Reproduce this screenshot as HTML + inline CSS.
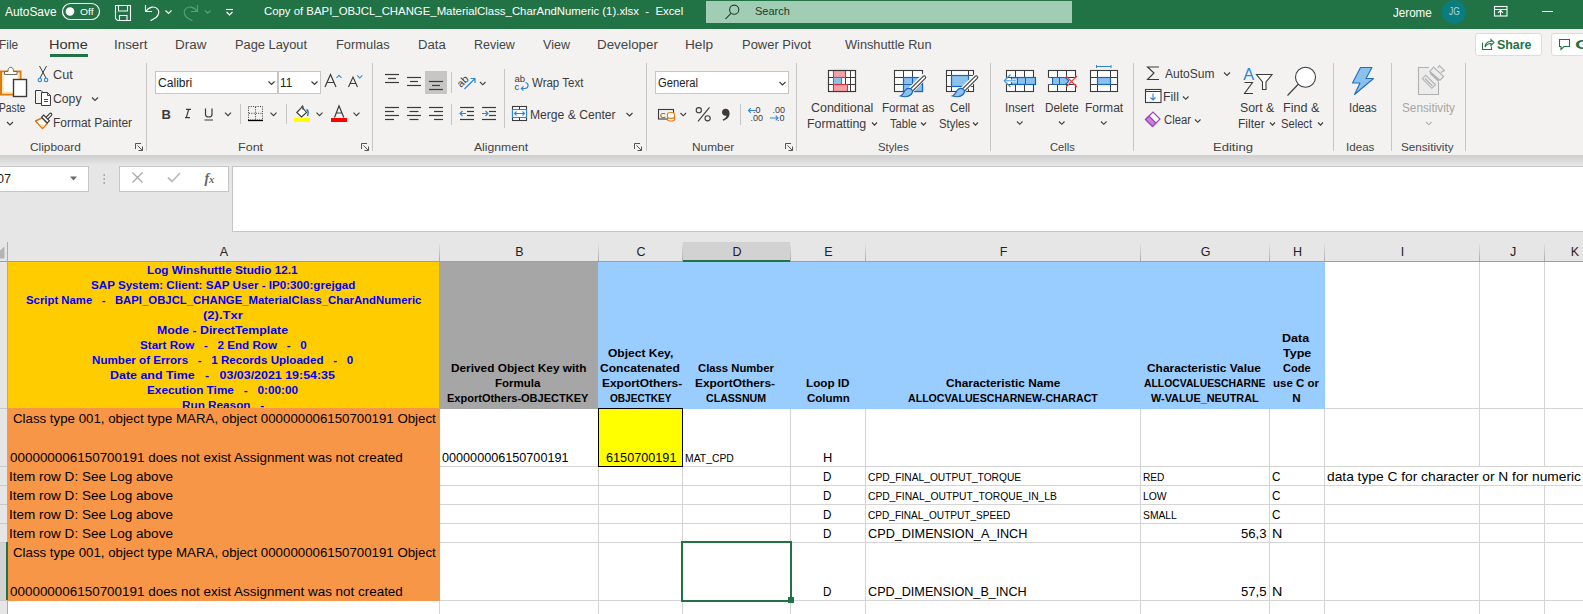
<!DOCTYPE html>
<html><head><meta charset="utf-8">
<style>
*{margin:0;padding:0;box-sizing:border-box}
html,body{width:1583px;height:614px;overflow:hidden;background:#fff;position:relative}
body{font-family:"Liberation Sans",sans-serif}
.r{position:absolute}
.t{position:absolute;white-space:pre;line-height:1;transform-origin:0 0}
svg{position:absolute;left:0;top:0}
</style></head><body>
<div class="r" style="left:0px;top:0px;width:1583px;height:29px;background:#217346;"></div>
<div class="r" style="left:0px;top:29px;width:1583px;height:126px;background:#f3f2f1;"></div>
<div class="r" style="left:0px;top:155px;width:1583px;height:87px;background:#e6e6e6;"></div>
<div class="r" style="left:0px;top:155px;width:1583px;height:11px;background:linear-gradient(#cecece,#e8e8e8);"></div>
<div class="r" style="left:50px;top:54px;width:38px;height:3px;background:#217346;"></div>
<div class="r" style="left:706px;top:1px;width:366px;height:22px;background:#a2cdb5;"></div>
<div class="r" style="left:1442px;top:0px;width:24px;height:24px;background:#0b7d7f;border-radius:12px"></div>
<div class="r" style="left:1474.5px;top:32.5px;width:67px;height:23px;background:#fff;border:1px solid #dedcda;border-radius:3px"></div>
<div class="r" style="left:1550.5px;top:32.5px;width:60px;height:23px;background:#fff;border:1px solid #dedcda;border-radius:3px"></div>
<div class="r" style="left:155px;top:71px;width:123px;height:23px;background:#fff;border:1px solid #c8c6c4"></div>
<div class="r" style="left:278px;top:71px;width:43px;height:23px;background:#fff;border:1px solid #c8c6c4"></div>
<div class="r" style="left:425px;top:71px;width:22px;height:23px;background:#c8c6c4;"></div>
<div class="r" style="left:655px;top:71px;width:134px;height:23px;background:#fff;border:1px solid #c8c6c4"></div>
<div class="r" style="left:-2px;top:166px;width:91px;height:26px;background:#fff;border:1px solid #c6c6c6"></div>
<div class="r" style="left:119px;top:166px;width:110px;height:26px;background:#fff;border:1px solid #c6c6c6"></div>
<div class="r" style="left:232px;top:166px;width:1360px;height:66px;background:#fff;border:1px solid #c6c6c6"></div>
<div class="r" style="left:0px;top:242px;width:1583px;height:19px;background:#e6e6e6;"></div>
<div class="r" style="left:683px;top:242px;width:107px;height:19px;background:#d2d2d2;"></div>
<div class="r" style="left:0px;top:261px;width:1583px;height:1px;background:#9e9e9e;"></div>
<div class="r" style="left:683px;top:260px;width:107px;height:2px;background:#217346;"></div>
<div class="r" style="left:0px;top:262px;width:7px;height:352px;background:#e6e6e6;"></div>
<div class="r" style="left:8px;top:262px;width:1575px;height:352px;background:#fff;"></div>
<div class="r" style="left:8px;top:262px;width:431px;height:146px;background:#ffcc00;"></div>
<div class="r" style="left:440px;top:262px;width:158px;height:146px;background:#a6a6a6;"></div>
<div class="r" style="left:599px;top:262px;width:726px;height:146px;background:#99ccff;"></div>
<div class="r" style="left:8px;top:409px;width:431px;height:191px;background:#f79646;"></div>
<div class="r" style="left:599px;top:409px;width:83px;height:57px;background:#ffff00;"></div>
<div class="r" style="left:439px;top:262px;width:1px;height:352px;background:#d4d4d4"></div><div class="r" style="left:598px;top:262px;width:1px;height:352px;background:#d4d4d4"></div><div class="r" style="left:682px;top:262px;width:1px;height:352px;background:#d4d4d4"></div><div class="r" style="left:790px;top:262px;width:1px;height:352px;background:#d4d4d4"></div><div class="r" style="left:865px;top:262px;width:1px;height:352px;background:#d4d4d4"></div><div class="r" style="left:1140px;top:262px;width:1px;height:352px;background:#d4d4d4"></div><div class="r" style="left:1269px;top:262px;width:1px;height:352px;background:#d4d4d4"></div><div class="r" style="left:1324px;top:262px;width:1px;height:352px;background:#d4d4d4"></div><div class="r" style="left:1479px;top:262px;width:1px;height:352px;background:#d4d4d4"></div><div class="r" style="left:1544px;top:262px;width:1px;height:352px;background:#d4d4d4"></div><div class="r" style="left:8px;top:408px;width:1575px;height:1px;background:#d4d4d4"></div><div class="r" style="left:8px;top:466px;width:1575px;height:1px;background:#d4d4d4"></div><div class="r" style="left:8px;top:485px;width:1575px;height:1px;background:#d4d4d4"></div><div class="r" style="left:8px;top:504px;width:1575px;height:1px;background:#d4d4d4"></div><div class="r" style="left:8px;top:523px;width:1575px;height:1px;background:#d4d4d4"></div><div class="r" style="left:8px;top:542px;width:1575px;height:1px;background:#d4d4d4"></div><div class="r" style="left:8px;top:600px;width:1575px;height:1px;background:#d4d4d4"></div>
<div class="r" style="left:8px;top:262px;width:431px;height:146px;background:#ffcc00"></div><div class="r" style="left:439px;top:262px;width:159px;height:147px;background:#a6a6a6"></div><div class="r" style="left:598px;top:262px;width:727px;height:147px;background:#99ccff"></div><div class="r" style="left:8px;top:408px;width:432px;height:193px;background:#f79646"></div><div class="r" style="left:598px;top:408px;width:85px;height:59px;background:#000"></div><div class="r" style="left:599px;top:409px;width:83px;height:57px;background:#ffff00"></div><div class="r" style="left:1479px;top:467px;width:1px;height:18px;background:#fff"></div><div class="r" style="left:1544px;top:467px;width:1px;height:18px;background:#fff"></div><div class="r" style="left:681px;top:541px;width:111px;height:61px;background:#217346"></div><div class="r" style="left:683px;top:543px;width:107px;height:57px;background:#fff"></div><div class="r" style="left:788px;top:597px;width:6px;height:6px;background:#217346"></div><div class="r" style="left:786px;top:596px;width:2px;height:2px;background:#fff"></div>
<div class="r" style="left:7px;top:242px;width:1px;height:19px;background:linear-gradient(#e6e6e6,#ababab)"></div><div class="r" style="left:439px;top:242px;width:1px;height:19px;background:linear-gradient(#e6e6e6,#ababab)"></div><div class="r" style="left:598px;top:242px;width:1px;height:19px;background:linear-gradient(#e6e6e6,#ababab)"></div><div class="r" style="left:682px;top:242px;width:1px;height:19px;background:linear-gradient(#e6e6e6,#ababab)"></div><div class="r" style="left:790px;top:242px;width:1px;height:19px;background:linear-gradient(#e6e6e6,#ababab)"></div><div class="r" style="left:865px;top:242px;width:1px;height:19px;background:linear-gradient(#e6e6e6,#ababab)"></div><div class="r" style="left:1140px;top:242px;width:1px;height:19px;background:linear-gradient(#e6e6e6,#ababab)"></div><div class="r" style="left:1269px;top:242px;width:1px;height:19px;background:linear-gradient(#e6e6e6,#ababab)"></div><div class="r" style="left:1324px;top:242px;width:1px;height:19px;background:linear-gradient(#e6e6e6,#ababab)"></div><div class="r" style="left:1479px;top:242px;width:1px;height:19px;background:linear-gradient(#e6e6e6,#ababab)"></div><div class="r" style="left:1544px;top:242px;width:1px;height:19px;background:linear-gradient(#e6e6e6,#ababab)"></div><div class="r" style="left:7px;top:242px;width:1px;height:372px;background:#ababab"></div><div class="r" style="left:0;top:408px;width:7px;height:1px;background:#c8c8c8"></div><div class="r" style="left:0;top:466px;width:7px;height:1px;background:#c8c8c8"></div><div class="r" style="left:0;top:485px;width:7px;height:1px;background:#c8c8c8"></div><div class="r" style="left:0;top:504px;width:7px;height:1px;background:#c8c8c8"></div><div class="r" style="left:0;top:523px;width:7px;height:1px;background:#c8c8c8"></div><div class="r" style="left:0;top:542px;width:7px;height:1px;background:#c8c8c8"></div><div class="r" style="left:0;top:600px;width:7px;height:1px;background:#c8c8c8"></div><div class="r" style="left:0px;top:543px;width:6px;height:57px;background:#d2d2d2"></div><div class="r" style="left:6px;top:542px;width:2px;height:58px;background:#217346"></div>
<svg width="1583" height="614" viewBox="0 0 1583 614"><rect x="62.5" y="3.5" width="37" height="16" rx="8" fill="none" stroke="#fff" stroke-width="1.2"/><circle cx="70" cy="11.5" r="4.3" fill="#fff"/><path d="M115.5 5.5H130.5V20.5H117.5L115.5 18.5Z" fill="none" stroke="#fff" stroke-width="1.1"/><path d="M118.5 5.5V11H127.5V5.5" fill="none" stroke="#fff" stroke-width="1.1"/><path d="M119.5 20.5V15.5H127V20.5" fill="none" stroke="#fff" stroke-width="1.1"/><path d="M145.5 5V11.5H152" fill="none" stroke="#fff" stroke-width="1.1"/><path d="M146 11.2C149 6.5 155 5.5 158 9.5C160 12.5 158.5 15 156 17.5L150.5 20.8" fill="none" stroke="#fff" stroke-width="1.2"/><path d="M165.5 10.5L168.5 13.5L171.5 10.5" fill="none" stroke="#fff" stroke-width="1.2"/><path d="M197.5 5V11.5H191" fill="none" stroke="#5e9c7a" stroke-width="1.1"/><path d="M197 11.2C194 6.5 188 5.5 185 9.5C183 12.5 184.5 15 187 17.5L192.5 20.8" fill="none" stroke="#5e9c7a" stroke-width="1.2"/><path d="M205 10.5L207.75 13.2L210.5 10.5" fill="none" stroke="#5e9c7a" stroke-width="1.1"/><path d="M226 9.5L233 9.5" stroke="#fff" stroke-width="1.1" fill="none"/><path d="M226.5 12L229.5 15L232.5 12" fill="none" stroke="#fff" stroke-width="1.2"/><circle cx="734.2" cy="9.7" r="4.6" fill="none" stroke="#1f3b2b" stroke-width="1.1"/><path d="M731 13.3L725.5 18.8" stroke="#1f3b2b" stroke-width="1.1" fill="none"/><rect x="1494.5" y="6.5" width="12.5" height="9.5" fill="none" stroke="#fff" stroke-width="1.1"/><path d="M1494.5 9.5L1507 9.5" stroke="#fff" stroke-width="1" fill="none"/><path d="M1498 12.8L1500.5 10.3L1503 12.8M1500.5 10.5V16" fill="none" stroke="#fff" stroke-width="1.1"/><path d="M1542 11.5L1553 11.5" stroke="#fff" stroke-width="1" fill="none"/><rect x="1" y="71.5" width="19.5" height="23" fill="#fff" stroke="#e07a10" stroke-width="2" /><rect x="3" y="73.5" width="15.5" height="19" fill="#fff" stroke="#fde5a8" stroke-width="1.6" /><path d="M4.5 74.5V71.5H8C8 68.5 9 67.3 10.7 67.3C12.4 67.3 13.5 68.5 13.5 71.5H17V74.5Z" fill="#fff" stroke="#6b6b6b" stroke-width="1"/><rect x="13.5" y="79.5" width="13" height="17" fill="#fff" stroke="#3b3b3b" stroke-width="1.4" /><path d="M7 122L10.0 125L13 122" fill="none" stroke="#3b3b3b" stroke-width="1.1"/><path d="M39.5 66L46 78" stroke="#3b3b3b" stroke-width="1" fill="none"/><path d="M46.5 66L40 78" stroke="#3b3b3b" stroke-width="1" fill="none"/><circle cx="39.8" cy="80" r="1.7" fill="none" stroke="#2b88d8" stroke-width="1.1"/><circle cx="46.1" cy="80" r="1.7" fill="none" stroke="#2b88d8" stroke-width="1.1"/><path d="M41.5 103.5H35.5V90.5H41L43.5 93" fill="none" stroke="#3b3b3b" stroke-width="1"/><path d="M41.5 92.5H47.5L50.5 95.5V105.5H41.5Z" fill="#fff" stroke="#3b3b3b" stroke-width="1"/><path d="M47.5 92.5V95.5H50.5M44 99.5H48M44 101.5H48" fill="none" stroke="#3b3b3b" stroke-width="0.9"/><path d="M92 97.5L95.0 100.5L98 97.5" fill="none" stroke="#3b3b3b" stroke-width="1.1"/><path d="M35.5 121L42 117.8L47.3 123.6L42.5 128.6Z" fill="#fff" stroke="#d87316" stroke-width="1.4" stroke-linejoin="round"/><path d="M39.5 124L45.3 125.3L42.6 127.8Z" fill="#fddc8a"/><path d="M46.3 118.7L50.6 114.4" stroke="#333" stroke-width="3.6" stroke-linecap="round"/><path d="M46.3 118.7L50.6 114.4" stroke="#fff" stroke-width="1.4" stroke-linecap="round"/><path d="M41.6 117.2L43.7 115.1L49.4 120.8L47.3 122.9Z" fill="#fff" stroke="#333" stroke-width="1.1"/><path d="M135.5 149V143.5H141M137.5 145.5L142.5 150.5M142.5 146.5V150.5H138.5" fill="none" stroke="#555" stroke-width="1"/><path d="M361.5 149V143.5H367M363.5 145.5L368.5 150.5M368.5 146.5V150.5H364.5" fill="none" stroke="#555" stroke-width="1"/><path d="M634.5 149V143.5H640M636.5 145.5L641.5 150.5M641.5 146.5V150.5H637.5" fill="none" stroke="#555" stroke-width="1"/><path d="M785.5 149V143.5H791M787.5 145.5L792.5 150.5M792.5 146.5V150.5H788.5" fill="none" stroke="#555" stroke-width="1"/><path d="M268.5 81.5L271.5 84.5L274.5 81.5" fill="none" stroke="#3b3b3b" stroke-width="1.2"/><path d="M311.5 81.5L314.5 84.5L317.5 81.5" fill="none" stroke="#3b3b3b" stroke-width="1.2"/><path d="M325 87L330.5 74.5L336 87M327 82.5H334" fill="none" stroke="#3b3b3b" stroke-width="1.2"/><path d="M336.5 78L339 75.3L341.5 78" fill="none" stroke="#2b88d8" stroke-width="1.1"/><path d="M348.5 87L353 77L357.5 87M350.3 83.5H355.7" fill="none" stroke="#3b3b3b" stroke-width="1.1"/><path d="M357.3 75.3L359.8 78L362.3 75.3" fill="none" stroke="#2b88d8" stroke-width="1.1"/><text x="161.5" y="118.5" font-family="Liberation Sans" font-weight="bold" font-size="13" fill="#3b3b3b">B</text><path d="M186 109.3H191M185 117.7H190M188.7 109.3L186.3 117.7" fill="none" stroke="#3b3b3b" stroke-width="1.2"/><path d="M205.5 108.5V114.5C205.5 117.8 212 117.8 212 114.5V108.5" fill="none" stroke="#3b3b3b" stroke-width="1.2"/><path d="M204.5 120L213 120" stroke="#3b3b3b" stroke-width="1" fill="none"/><path d="M225 112.7L228.0 115.7L231 112.7" fill="none" stroke="#3b3b3b" stroke-width="1.1"/><path d="M240.5 104L240.5 124" stroke="#c8c6c4" stroke-width="1" fill="none"/><rect x="248.5" y="106.5" width="14" height="13.5" fill="none" stroke="#3b3b3b" stroke-width="1" stroke-dasharray="1 1.3"/><path d="M255.5 107V120M249 113.3H262" fill="none" stroke="#3b3b3b" stroke-width="1" stroke-dasharray="1 1.3"/><path d="M248 120.5L263 120.5" stroke="#000" stroke-width="1.3" fill="none"/><path d="M270.5 112.7L273.5 115.7L276.5 112.7" fill="none" stroke="#3b3b3b" stroke-width="1.1"/><path d="M286.5 104L286.5 124" stroke="#c8c6c4" stroke-width="1" fill="none"/><path d="M296.8 112.5L302 107L306.5 112.5L301.5 117Z" fill="#fff" stroke="#3b3b3b" stroke-width="1.1"/><path d="M302 107.5V106C302 105.5 303 105.5 303 106V110" fill="none" stroke="#3b3b3b" stroke-width="1"/><path d="M306.5 109.5C308.5 110.5 308.5 113 307.5 116" fill="none" stroke="#1e6fc0" stroke-width="1.4"/><rect x="294" y="118" width="16" height="4" fill="#ffff00" stroke="none" stroke-width="1" /><path d="M316.5 112.7L319.5 115.7L322.5 112.7" fill="none" stroke="#3b3b3b" stroke-width="1.1"/><path d="M334.5 117.5L339 105.8L343.8 117.5M336.3 113H342" fill="none" stroke="#3b3b3b" stroke-width="1.2"/><rect x="331" y="118" width="16" height="4" fill="#ff0000" stroke="none" stroke-width="1" /><path d="M353.5 112.7L356.5 115.7L359.5 112.7" fill="none" stroke="#3b3b3b" stroke-width="1.1"/><path d="M385 74.5L399 74.5" stroke="#3b3b3b" stroke-width="1.2" fill="none"/><path d="M388 78.5L396 78.5" stroke="#3b3b3b" stroke-width="1.2" fill="none"/><path d="M385 82.5L399 82.5" stroke="#3b3b3b" stroke-width="1.2" fill="none"/><path d="M407 77.5L421 77.5" stroke="#3b3b3b" stroke-width="1.2" fill="none"/><path d="M410 81.5L418 81.5" stroke="#3b3b3b" stroke-width="1.2" fill="none"/><path d="M407 85.5L421 85.5" stroke="#3b3b3b" stroke-width="1.2" fill="none"/><path d="M429 81.5L443 81.5" stroke="#3b3b3b" stroke-width="1.2" fill="none"/><path d="M432 85.5L440 85.5" stroke="#3b3b3b" stroke-width="1.2" fill="none"/><path d="M429 89.5L443 89.5" stroke="#3b3b3b" stroke-width="1.2" fill="none"/><path d="M451.5 72L451.5 93" stroke="#c8c6c4" stroke-width="1" fill="none"/><text x="0" y="0" font-family="Liberation Sans" font-size="10.5" fill="#3b3b3b" transform="translate(461 88) rotate(-45)">ab</text><path d="M464.5 89L474.5 79M470.5 78.5H475V83" fill="none" stroke="#2b88d8" stroke-width="1.2"/><path d="M480 82L482.75 84.8L485.5 82" fill="none" stroke="#3b3b3b" stroke-width="1.1"/><path d="M385 107.5L399 107.5" stroke="#3b3b3b" stroke-width="1.2" fill="none"/><path d="M385 111.5L394 111.5" stroke="#3b3b3b" stroke-width="1.2" fill="none"/><path d="M385 115.5L399 115.5" stroke="#3b3b3b" stroke-width="1.2" fill="none"/><path d="M385 119.5L394 119.5" stroke="#3b3b3b" stroke-width="1.2" fill="none"/><path d="M407 107.5L421 107.5" stroke="#3b3b3b" stroke-width="1.2" fill="none"/><path d="M409.5 111.5L418.5 111.5" stroke="#3b3b3b" stroke-width="1.2" fill="none"/><path d="M407 115.5L421 115.5" stroke="#3b3b3b" stroke-width="1.2" fill="none"/><path d="M409.5 119.5L418.5 119.5" stroke="#3b3b3b" stroke-width="1.2" fill="none"/><path d="M429 107.5L443 107.5" stroke="#3b3b3b" stroke-width="1.2" fill="none"/><path d="M434 111.5L443 111.5" stroke="#3b3b3b" stroke-width="1.2" fill="none"/><path d="M429 115.5L443 115.5" stroke="#3b3b3b" stroke-width="1.2" fill="none"/><path d="M434 119.5L443 119.5" stroke="#3b3b3b" stroke-width="1.2" fill="none"/><path d="M451.5 104L451.5 125" stroke="#c8c6c4" stroke-width="1" fill="none"/><path d="M460 107.5L474 107.5" stroke="#3b3b3b" stroke-width="1.2" fill="none"/><path d="M467 111.5L474 111.5" stroke="#3b3b3b" stroke-width="1.2" fill="none"/><path d="M467 115.5L474 115.5" stroke="#3b3b3b" stroke-width="1.2" fill="none"/><path d="M460 119.5L474 119.5" stroke="#3b3b3b" stroke-width="1.2" fill="none"/><path d="M460 113.5H466M462.5 111L460 113.5L462.5 116" fill="none" stroke="#2b88d8" stroke-width="1.2"/><path d="M482 107.5L496 107.5" stroke="#3b3b3b" stroke-width="1.2" fill="none"/><path d="M489 111.5L496 111.5" stroke="#3b3b3b" stroke-width="1.2" fill="none"/><path d="M489 115.5L496 115.5" stroke="#3b3b3b" stroke-width="1.2" fill="none"/><path d="M482 119.5L496 119.5" stroke="#3b3b3b" stroke-width="1.2" fill="none"/><path d="M482 113.5H488M485.5 111L488 113.5L485.5 116" fill="none" stroke="#2b88d8" stroke-width="1.2"/><path d="M504.5 69L504.5 128" stroke="#c8c6c4" stroke-width="1" fill="none"/><text x="514.5" y="82" font-family="Liberation Sans" font-size="9.5" fill="#3b3b3b">ab</text><text x="514.5" y="89.5" font-family="Liberation Sans" font-size="9.5" fill="#3b3b3b">c</text><path d="M525.5 82.5C529 83 529 88 525 88.5H521.5M523.5 86.3L521.3 88.5L523.5 90.7" fill="none" stroke="#2b88d8" stroke-width="1.2"/><rect x="512.5" y="106.5" width="14" height="14" fill="#fff" stroke="#3b3b3b" stroke-width="1.1" /><rect x="512.5" y="109.5" width="14" height="8" fill="#fff" stroke="#2b88d8" stroke-width="1.1" /><path d="M519.5 106.5L519.5 109.5" stroke="#3b3b3b" stroke-width="1" fill="none"/><path d="M519.5 117.5L519.5 120.5" stroke="#3b3b3b" stroke-width="1" fill="none"/><path d="M514.5 113.5H524.5M516.5 111.5L514.5 113.5L516.5 115.5M522.5 111.5L524.5 113.5L522.5 115.5" fill="none" stroke="#2b88d8" stroke-width="1.1"/><path d="M626.5 113L629.5 116L632.5 113" fill="none" stroke="#3b3b3b" stroke-width="1.1"/><path d="M779.5 82L782.5 85L785.5 82" fill="none" stroke="#3b3b3b" stroke-width="1.2"/><rect x="658.5" y="109.5" width="15" height="9.5" fill="none" stroke="#3b3b3b" stroke-width="1.1" /><text x="660" y="117.5" font-family="Liberation Sans" font-size="8" fill="#3b3b3b">C</text><ellipse cx="671" cy="114" rx="3.5" ry="1.5" fill="#fff" stroke="#e07a10" stroke-width="1.1"/><path d="M667.5 114V119.5C667.5 121.5 674.5 121.5 674.5 119.5V114M667.5 117C667.5 118.8 674.5 118.8 674.5 117" fill="#fff" stroke="#e07a10" stroke-width="1.1"/><path d="M680.5 113L683.25 115.8L686.0 113" fill="none" stroke="#3b3b3b" stroke-width="1.1"/><circle cx="698.8" cy="110.2" r="2.6" fill="none" stroke="#3b3b3b" stroke-width="1.1"/><circle cx="707.6" cy="118.3" r="2.6" fill="none" stroke="#3b3b3b" stroke-width="1.1"/><path d="M709.5 107.3L698 121.3" stroke="#3b3b3b" stroke-width="1.1"/><path d="M725.5 108.8C728 108.8 729.6 110.8 729.6 113.5C729.6 116.8 727.2 119.5 723.2 120.8L722.6 119.6C725 118.6 726.3 117.2 726.5 115.6C726.2 115.8 725.8 115.8 725.5 115.8C723.5 115.8 722 114.3 722 112.3C722 110.3 723.5 108.8 725.5 108.8Z" fill="#3b3b3b"/><path d="M740.5 104L740.5 125" stroke="#c8c6c4" stroke-width="1" fill="none"/><text x="753" y="112.5" font-family="Liberation Sans" font-size="9" fill="#3b3b3b">.0</text><text x="750.5" y="120.8" font-family="Liberation Sans" font-size="9" fill="#3b3b3b">.00</text><path d="M748.5 110.5H756M750.8 108.2L748.5 110.5L750.8 112.8" fill="none" stroke="#2b88d8" stroke-width="1.1"/><text x="772.5" y="112.5" font-family="Liberation Sans" font-size="9" fill="#3b3b3b">.00</text><text x="777" y="120.8" font-family="Liberation Sans" font-size="9" fill="#3b3b3b">.0</text><path d="M770 118H778M775.7 115.7L778 118L775.7 120.3" fill="none" stroke="#2b88d8" stroke-width="1.1"/><rect x="828.5" y="70.5" width="27" height="21" fill="#fff" stroke="#3b3b3b" stroke-width="1.1" /><path d="M845.5 70.5V91.5M850.5 70.5V91.5M828.5 77.5H855.5M828.5 84.5H855.5" fill="none" stroke="#3b3b3b" stroke-width="1"/><rect x="833.5" y="70.5" width="12" height="7" fill="#f4a0a8" stroke="#e03030" stroke-width="1.1" /><rect x="833.5" y="77.5" width="8" height="7" fill="#8cc0ed" stroke="#2b88d8" stroke-width="1.1" /><rect x="833.5" y="84.5" width="14" height="7" fill="#f4a0a8" stroke="#e03030" stroke-width="1.1" /><rect x="828.5" y="70.5" width="27" height="21" fill="none" stroke="#3b3b3b" stroke-width="1.1" /><rect x="894.5" y="70.5" width="28" height="21" fill="#fff" stroke="#3b3b3b" stroke-width="1.1" /><path d="M903.5 70.5V91.5M912.5 70.5V91.5M894.5 77.5H922.5M894.5 84.5H922.5" fill="none" stroke="#3b3b3b" stroke-width="1"/><rect x="903.5" y="77.5" width="19" height="14" fill="#8cc0ed" stroke="#1565c0" stroke-width="1.2" /><path d="M912.5 77.5V91.5M903.5 84.5H922.5" fill="none" stroke="#1565c0" stroke-width="1.1"/><path d="M925 76L910 91" stroke="#f3f2f1" stroke-width="6.5" stroke-linecap="round"/><path d="M924.2 77.3L911.5 90" stroke="#404040" stroke-width="4" stroke-linecap="round"/><path d="M924.2 77.3L911.5 90" stroke="#fff" stroke-width="1.8" stroke-linecap="round"/><path d="M900.5 96C904 97 908.5 97 911 94.5C913 92.5 913 90 911 89C909 88 906.5 88.5 905 90.5C903.5 92.5 903 95 900.5 96Z" fill="#8cc0ed" stroke="#1565c0" stroke-width="1.2"/><rect x="946.5" y="70.5" width="27" height="21" fill="#fff" stroke="#3b3b3b" stroke-width="1.1" /><path d="M951.5 70.5V91.5M968.5 70.5V91.5M946.5 75.5H973.5M946.5 86.5H973.5" fill="none" stroke="#3b3b3b" stroke-width="1"/><rect x="951.5" y="75.5" width="17" height="11" fill="#8cc0ed" stroke="#1565c0" stroke-width="1.2" /><path d="M977 76L962 91" stroke="#f3f2f1" stroke-width="6.5" stroke-linecap="round"/><path d="M976.2 77.3L963.5 90" stroke="#404040" stroke-width="4" stroke-linecap="round"/><path d="M976.2 77.3L963.5 90" stroke="#fff" stroke-width="1.8" stroke-linecap="round"/><path d="M952.5 96C956 97 960.5 97 963 94.5C965 92.5 965 90 963 89C961 88 958.5 88.5 957 90.5C955.5 92.5 955 95 952.5 96Z" fill="#8cc0ed" stroke="#1565c0" stroke-width="1.2"/><path d="M872 122.5L874.5 125.1L877 122.5" fill="none" stroke="#3b3b3b" stroke-width="1.1"/><path d="M921 122.5L923.5 125.1L926 122.5" fill="none" stroke="#3b3b3b" stroke-width="1.1"/><path d="M973 122.5L975.5 125.1L978 122.5" fill="none" stroke="#3b3b3b" stroke-width="1.1"/><rect x="1006.5" y="70.5" width="27" height="21" fill="#fff" stroke="#3b3b3b" stroke-width="1.1" /><path d="M1015.5 70.5V91.5M1024.5 70.5V91.5M1006.5 77.5H1033.5M1006.5 84.5H1033.5" fill="none" stroke="#3b3b3b" stroke-width="1"/><rect x="1005.8" y="77.8" width="1.5" height="6.4" fill="#f3f2f1" stroke="none" stroke-width="1" /><rect x="1011.5" y="77.5" width="24" height="7" fill="#8cc0ed" stroke="#1565c0" stroke-width="1.2" /><path d="M1017.5 77.5L1017.5 84.5" stroke="#1565c0" stroke-width="1" fill="none"/><path d="M1025.5 77.5L1025.5 84.5" stroke="#1565c0" stroke-width="1" fill="none"/><path d="M1004.5 80.8H1016.5" stroke="#fff" stroke-width="2.6"/><path d="M1005 80.8H1016" stroke="#3a96dd" stroke-width="1"/><path d="M1010.5 74.5L1004.3 80.8L1010.5 87" fill="none" stroke="#3a96dd" stroke-width="1.2"/><rect x="1048.5" y="70.5" width="27" height="21" fill="#fff" stroke="#3b3b3b" stroke-width="1.1" /><path d="M1057.5 70.5V91.5M1066.5 70.5V91.5M1048.5 77.5H1075.5M1048.5 84.5H1075.5" fill="none" stroke="#3b3b3b" stroke-width="1"/><rect x="1047.5" y="77.8" width="3.5" height="6.4" fill="#f3f2f1" stroke="none" stroke-width="1" /><rect x="1074.5" y="77.8" width="2" height="6.4" fill="#f3f2f1" stroke="none" stroke-width="1" /><path d="M1052.5 77.5H1065.5L1069 81L1065.5 84.5H1052.5Z" fill="#8cc0ed" stroke="#1565c0" stroke-width="1.2"/><path d="M1059.5 77.5L1059.5 84.5" stroke="#1565c0" stroke-width="1" fill="none"/><path d="M1066 76L1077 87M1077 76L1066 87" stroke="#e8403a" stroke-width="1.1"/><rect x="1090.5" y="70.5" width="27" height="21" fill="#fff" stroke="#3b3b3b" stroke-width="1.1" /><path d="M1097.5 70.5V91.5M1110.5 70.5V91.5M1090.5 77.5H1117.5M1090.5 84.5H1117.5" fill="none" stroke="#3b3b3b" stroke-width="1"/><rect x="1097.5" y="77.5" width="13" height="7" fill="#8cc0ed" stroke="#1565c0" stroke-width="1.2" /><path d="M1096.5 66.5H1111M1096.5 65V68M1111 65V68" fill="none" stroke="#2b88d8" stroke-width="1"/><path d="M1017 121.5L1019.75 124.3L1022.5 121.5" fill="none" stroke="#3b3b3b" stroke-width="1.1"/><path d="M1059 121.5L1061.75 124.3L1064.5 121.5" fill="none" stroke="#3b3b3b" stroke-width="1.1"/><path d="M1101 121.5L1103.75 124.3L1106.5 121.5" fill="none" stroke="#3b3b3b" stroke-width="1.1"/><path d="M1159 67H1147.5L1154 73L1147.5 79.5H1159" fill="none" stroke="#3b3b3b" stroke-width="1.1"/><path d="M1224 72.5L1227.0 75.5L1230 72.5" fill="none" stroke="#3b3b3b" stroke-width="1.1"/><rect x="1145.5" y="89.5" width="15.5" height="13" fill="#fff" stroke="#3b3b3b" stroke-width="1.1" /><path d="M1145.5 91.5L1161 91.5" stroke="#3b3b3b" stroke-width="1" fill="none"/><path d="M1153 93.5V100M1150.5 97.5L1153 100L1155.5 97.5" fill="none" stroke="#2b88d8" stroke-width="1.1"/><path d="M1183 96.5L1185.75 99.3L1188.5 96.5" fill="none" stroke="#3b3b3b" stroke-width="1.1"/><path d="M1145.5 119.5L1153 112L1160 119L1152.5 126.5Z" fill="#fff" stroke="#9b3fb5" stroke-width="1.1"/><path d="M1145.5 119.5L1149 116L1156 123L1152.5 126.5Z" fill="#c880d8" stroke="#9b3fb5" stroke-width="1.1"/><path d="M1195 119.5L1197.75 122.3L1200.5 119.5" fill="none" stroke="#3b3b3b" stroke-width="1.1"/><text x="1243.3" y="80" font-family="Liberation Sans" font-size="16.5" fill="#2b88d8">A</text><path d="M1244.5 82.5H1252.5L1244.5 93.5H1253" fill="none" stroke="#3b3b3b" stroke-width="1.1"/><path d="M1256.5 74.5H1272L1266 82V89.5H1262.5V82Z" fill="#fff" stroke="#3b3b3b" stroke-width="1.1"/><path d="M1270 122.5L1272.5 125.1L1275 122.5" fill="none" stroke="#3b3b3b" stroke-width="1.1"/><circle cx="1305.5" cy="77.2" r="10" fill="#fff" stroke="#3b3b3b" stroke-width="1.1"/><path d="M1298 84.5L1287.5 95.5" stroke="#3b3b3b" stroke-width="1.1" fill="none"/><path d="M1318 122.5L1320.5 125.1L1323 122.5" fill="none" stroke="#3b3b3b" stroke-width="1.1"/><path d="M1360.5 67.5H1372L1366 78.5H1373.5L1354.5 94.5L1360 83H1352.5Z" fill="#8cc0ed" stroke="#1e6fc0" stroke-width="1.1" stroke-linejoin="round"/><path d="M1429 67.5H1418.5V94.5H1438.5V82" fill="#ececec" stroke="#b0b0b0" stroke-width="1.1"/><path d="M1422.3 78.6L1425.7 75.2L1435.4 84.8L1431.8 88.3Z" fill="#ececec" stroke="#b0b0b0" stroke-width="1.1"/><path d="M1425 78.5L1432.5 86" stroke="#b0b0b0" stroke-width="1.3"/><path d="M1429.8 71.6L1433.5 67L1443.7 76.5L1440 80.2Z" fill="#ececec" stroke="#b0b0b0" stroke-width="1.1"/><path d="M1430.5 73L1438.8 81" stroke="#b0b0b0" stroke-width="2"/><path d="M1437.8 68L1439.5 65.5L1444.5 70.5L1440.8 72.5" fill="#ececec" stroke="#b0b0b0" stroke-width="1.1"/><path d="M1426 122L1428.75 124.8L1431.5 122" fill="none" stroke="#b0b0b0" stroke-width="1.1"/><path d="M146.5 63L146.5 151" stroke="#c8c6c4" stroke-width="1" fill="none"/><path d="M372.5 63L372.5 151" stroke="#c8c6c4" stroke-width="1" fill="none"/><path d="M646.5 63L646.5 151" stroke="#c8c6c4" stroke-width="1" fill="none"/><path d="M796.5 63L796.5 151" stroke="#c8c6c4" stroke-width="1" fill="none"/><path d="M990.5 63L990.5 151" stroke="#c8c6c4" stroke-width="1" fill="none"/><path d="M1133.5 63L1133.5 151" stroke="#c8c6c4" stroke-width="1" fill="none"/><path d="M1333.5 63L1333.5 151" stroke="#c8c6c4" stroke-width="1" fill="none"/><path d="M1391.5 63L1391.5 151" stroke="#c8c6c4" stroke-width="1" fill="none"/><path d="M1465.5 63L1465.5 151" stroke="#c8c6c4" stroke-width="1" fill="none"/><path d="M1482.5 42.5V49.5H1491.5V46.5" fill="none" stroke="#217346" stroke-width="1.1"/><path d="M1485 47C1485.5 43 1488 41.5 1491 41.5V39.5L1494 42.5L1491 45.5V43.5C1488.5 43.5 1486.5 44.5 1485 47Z" fill="none" stroke="#217346" stroke-width="1.1"/><path d="M1559.5 39.5H1569.5V46.5H1564L1561 49.5V46.5H1559.5Z" fill="none" stroke="#217346" stroke-width="1.1"/><path d="M70 176.5H77L73.5 180.5Z" fill="#6b6b6b"/><rect x="103.5" y="174.3" width="1.4" height="1.4" fill="#8a8a8a"/><rect x="103.5" y="178.3" width="1.4" height="1.4" fill="#8a8a8a"/><rect x="103.5" y="182.3" width="1.4" height="1.4" fill="#8a8a8a"/><path d="M132.5 172.5L142.5 182.5M142.5 172.5L132.5 182.5" stroke="#a8a8a8" stroke-width="1.3"/><path d="M168 177.5L172 181.5L180 173" fill="none" stroke="#bdbdbd" stroke-width="1.8"/><text x="204.5" y="182.5" font-family="Liberation Serif" font-style="italic" font-weight="bold" font-size="14" fill="#666">f</text><text x="209" y="182.5" font-family="Liberation Serif" font-style="italic" font-weight="bold" font-size="10.5" fill="#666">x</text><path d="M4.5 246.5V258.5H0V250.5Z" fill="#b4b4b4"/></svg>
<div class="t" style="font-size:12px;font-weight:400;color:#fff;top:5.84px;left:5.00px;transform:scaleX(0.9903);">AutoSave</div><div class="t" style="font-size:9.5px;font-weight:400;color:#fff;top:6.96px;left:80.46px;transform:scaleX(1.0833);">Off</div><div class="t" style="font-size:11.4px;font-weight:400;color:#fff;top:6.35px;left:263.50px;transform:scaleX(0.9989);">Copy of BAPI_OBJCL_CHANGE_MaterialClass_CharAndNumeric (1).xlsx &nbsp;- &nbsp;Excel</div><div class="t" style="font-size:11.5px;font-weight:400;color:#1f3b2b;top:5.67px;left:754.92px;transform:scaleX(0.9589);">Search</div><div class="t" style="font-size:12px;font-weight:400;color:#fff;top:6.84px;left:1392.76px;transform:scaleX(0.9682);">Jerome</div><div class="t" style="font-size:10px;font-weight:400;color:#a8d8d8;top:6.54px;left:1448.79px;transform:scaleX(0.8511);">JG</div><div class="t" style="font-size:12.3px;font-weight:400;color:#444;top:38.59px;left:-0.96px;transform:scaleX(0.9644);">File</div><div class="t" style="font-size:12.3px;font-weight:400;color:#333;top:38.59px;left:48.82px;transform:scaleX(1.1840);">Home</div><div class="t" style="font-size:12.3px;font-weight:400;color:#444;top:38.59px;left:113.51px;transform:scaleX(1.0891);">Insert</div><div class="t" style="font-size:12.3px;font-weight:400;color:#444;top:38.59px;left:174.81px;transform:scaleX(1.0919);">Draw</div><div class="t" style="font-size:12.3px;font-weight:400;color:#444;top:38.59px;left:234.96px;transform:scaleX(1.0426);">Page Layout</div><div class="t" style="font-size:12.3px;font-weight:400;color:#444;top:38.59px;left:336.15px;transform:scaleX(1.0480);">Formulas</div><div class="t" style="font-size:12.3px;font-weight:400;color:#444;top:38.59px;left:417.93px;transform:scaleX(1.0680);">Data</div><div class="t" style="font-size:12.3px;font-weight:400;color:#444;top:38.59px;left:474.19px;transform:scaleX(1.0127);">Review</div><div class="t" style="font-size:12.3px;font-weight:400;color:#444;top:38.59px;left:542.80px;transform:scaleX(1.0189);">View</div><div class="t" style="font-size:12.3px;font-weight:400;color:#444;top:38.59px;left:596.91px;transform:scaleX(1.0855);">Developer</div><div class="t" style="font-size:12.3px;font-weight:400;color:#444;top:38.59px;left:684.79px;transform:scaleX(1.1116);">Help</div><div class="t" style="font-size:12.3px;font-weight:400;color:#444;top:38.59px;left:741.85px;transform:scaleX(1.0527);">Power Pivot</div><div class="t" style="font-size:12.3px;font-weight:400;color:#444;top:38.59px;left:845.00px;transform:scaleX(1.0381);">Winshuttle Run</div><div class="t" style="font-size:12.5px;font-weight:700;color:#217346;top:39.42px;left:1496.75px;transform:scaleX(0.9927);">Share</div><div class="t" style="font-size:12.5px;font-weight:700;color:#217346;top:39.42px;left:1575.15px;transform:scaleX(1.6970);">C</div><div class="t" style="font-size:11.5px;font-weight:400;color:#444;top:141.77px;left:30.28px;transform:scaleX(1.0333);">Clipboard</div><div class="t" style="font-size:11.5px;font-weight:400;color:#444;top:141.77px;left:237.91px;transform:scaleX(1.0909);">Font</div><div class="t" style="font-size:11.5px;font-weight:400;color:#444;top:141.77px;left:474.00px;transform:scaleX(1.0588);">Alignment</div><div class="t" style="font-size:11.5px;font-weight:400;color:#444;top:141.77px;left:691.97px;transform:scaleX(1.0314);">Number</div><div class="t" style="font-size:11.5px;font-weight:400;color:#444;top:141.77px;left:877.51px;transform:scaleX(0.9836);">Styles</div><div class="t" style="font-size:11.5px;font-weight:400;color:#444;top:141.77px;left:1049.52px;transform:scaleX(0.9697);">Cells</div><div class="t" style="font-size:11.5px;font-weight:400;color:#444;top:141.77px;left:1212.87px;transform:scaleX(1.1343);">Editing</div><div class="t" style="font-size:11.5px;font-weight:400;color:#444;top:141.77px;left:1345.99px;transform:scaleX(1.0093);">Ideas</div><div class="t" style="font-size:11.5px;font-weight:400;color:#444;top:141.77px;left:1401.49px;transform:scaleX(1.0146);">Sensitivity</div><div class="t" style="font-size:12px;font-weight:400;color:#3b3b3b;top:101.84px;left:-0.85px;transform:scaleX(0.8547);">Paste</div><div class="t" style="font-size:12px;font-weight:400;color:#3b3b3b;top:68.84px;left:53.47px;transform:scaleX(1.0556);">Cut</div><div class="t" style="font-size:12px;font-weight:400;color:#3b3b3b;top:92.84px;left:53.49px;transform:scaleX(1.0182);">Copy</div><div class="t" style="font-size:12px;font-weight:400;color:#3b3b3b;top:116.84px;left:53.00px;transform:scaleX(0.9968);">Format Painter</div><div class="t" style="font-size:12px;font-weight:400;color:#222;top:76.84px;left:158.00px;transform:scaleX(1.0076);">Calibri</div><div class="t" style="font-size:12px;font-weight:400;color:#222;top:76.84px;left:280.27px;transform:scaleX(0.9778);">11</div><div class="t" style="font-size:12px;font-weight:400;color:#3b3b3b;top:76.84px;left:531.50px;transform:scaleX(0.9581);">Wrap Text</div><div class="t" style="font-size:12px;font-weight:400;color:#3b3b3b;top:108.74px;left:530.49px;transform:scaleX(1.0096);">Merge &amp; Center</div><div class="t" style="font-size:12px;font-weight:400;color:#222;top:76.84px;left:658.23px;transform:scaleX(0.9349);">General</div><div class="t" style="font-size:12px;font-weight:400;color:#3b3b3b;top:101.84px;left:811.08px;transform:scaleX(1.0383);">Conditional</div><div class="t" style="font-size:12px;font-weight:400;color:#3b3b3b;top:117.84px;left:806.77px;transform:scaleX(1.0332);">Formatting</div><div class="t" style="font-size:12px;font-weight:400;color:#3b3b3b;top:101.84px;left:881.83px;transform:scaleX(0.9695);">Format as</div><div class="t" style="font-size:12px;font-weight:400;color:#3b3b3b;top:117.84px;left:889.77px;transform:scaleX(0.9286);">Table</div><div class="t" style="font-size:12px;font-weight:400;color:#3b3b3b;top:101.84px;left:949.51px;transform:scaleX(0.9744);">Cell</div><div class="t" style="font-size:12px;font-weight:400;color:#3b3b3b;top:117.84px;left:938.53px;transform:scaleX(0.9449);">Styles</div><div class="t" style="font-size:12px;font-weight:400;color:#3b3b3b;top:101.84px;left:1004.62px;transform:scaleX(0.9759);">Insert</div><div class="t" style="font-size:12px;font-weight:400;color:#3b3b3b;top:101.84px;left:1044.63px;transform:scaleX(0.9684);">Delete</div><div class="t" style="font-size:12px;font-weight:400;color:#3b3b3b;top:101.84px;left:1084.59px;transform:scaleX(1.0054);">Format</div><div class="t" style="font-size:12px;font-weight:400;color:#3b3b3b;top:68.04px;left:1164.50px;transform:scaleX(1.0010);">AutoSum</div><div class="t" style="font-size:12px;font-weight:400;color:#3b3b3b;top:90.64px;left:1163.46px;transform:scaleX(1.0370);">Fill</div><div class="t" style="font-size:12px;font-weight:400;color:#3b3b3b;top:113.54px;left:1164.03px;transform:scaleX(0.9464);">Clear</div><div class="t" style="font-size:12px;font-weight:400;color:#3b3b3b;top:101.84px;left:1240.49px;transform:scaleX(1.0260);">Sort &amp;</div><div class="t" style="font-size:12px;font-weight:400;color:#3b3b3b;top:117.84px;left:1238.40px;transform:scaleX(1.0039);">Filter</div><div class="t" style="font-size:12px;font-weight:400;color:#3b3b3b;top:101.84px;left:1283.45px;transform:scaleX(1.0507);">Find &amp;</div><div class="t" style="font-size:12px;font-weight:400;color:#3b3b3b;top:117.84px;left:1280.73px;transform:scaleX(0.9313);">Select</div><div class="t" style="font-size:12px;font-weight:400;color:#3b3b3b;top:101.84px;left:1348.56px;transform:scaleX(0.9429);">Ideas</div><div class="t" style="font-size:12px;font-weight:400;color:#a6a6a6;top:101.84px;left:1401.81px;transform:scaleX(0.9813);">Sensitivity</div><div class="t" style="font-size:12.5px;font-weight:400;color:#222;top:173.42px;left:-3.00px;transform:scaleX(1.0039);">07</div><div class="t" style="font-size:12.5px;font-weight:400;color:#222;top:246.42px;left:219.83px;">A</div><div class="t" style="font-size:12.5px;font-weight:400;color:#222;top:246.42px;left:515.33px;">B</div><div class="t" style="font-size:12.5px;font-weight:400;color:#222;top:246.42px;left:636.49px;">C</div><div class="t" style="font-size:12.5px;font-weight:400;color:#222;top:246.42px;left:732.49px;">D</div><div class="t" style="font-size:12.5px;font-weight:400;color:#222;top:246.42px;left:824.33px;">E</div><div class="t" style="font-size:12.5px;font-weight:400;color:#222;top:246.42px;left:999.68px;">F</div><div class="t" style="font-size:12.5px;font-weight:400;color:#222;top:246.42px;left:1200.64px;">G</div><div class="t" style="font-size:12.5px;font-weight:400;color:#222;top:246.42px;left:1292.99px;">H</div><div class="t" style="font-size:12.5px;font-weight:400;color:#222;top:246.42px;left:1400.76px;">I</div><div class="t" style="font-size:12.5px;font-weight:400;color:#222;top:246.42px;left:1509.88px;">J</div><div class="t" style="font-size:12.5px;font-weight:400;color:#222;top:246.42px;left:1570.83px;">K</div><div class="t" style="font-size:11.6px;font-weight:700;color:#0000ff;top:264.18px;left:147.24px;transform:scaleX(1.0125);">Log Winshuttle Studio 12.1</div><div class="t" style="font-size:11.6px;font-weight:700;color:#0000ff;top:279.18px;left:90.65px;transform:scaleX(1.0021);">SAP System: Client: SAP User - IP0:300:grejgad</div><div class="t" style="font-size:11.6px;font-weight:700;color:#0000ff;top:294.18px;left:25.56px;transform:scaleX(0.9787);">Script Name &nbsp; - &nbsp; BAPI_OBJCL_CHANGE_MaterialClass_CharAndNumeric</div><div class="t" style="font-size:11.6px;font-weight:700;color:#0000ff;top:309.18px;left:203.44px;transform:scaleX(1.1223);">(2).Txr</div><div class="t" style="font-size:11.6px;font-weight:700;color:#0000ff;top:324.18px;left:157.20px;transform:scaleX(1.0612);">Mode - DirectTemplate</div><div class="t" style="font-size:11.6px;font-weight:700;color:#0000ff;top:339.18px;left:139.75px;transform:scaleX(1.0030);">Start Row &nbsp; - &nbsp; 2 End Row &nbsp; - &nbsp; 0</div><div class="t" style="font-size:11.6px;font-weight:700;color:#0000ff;top:354.18px;left:92.25px;transform:scaleX(1.0010);">Number of Errors &nbsp; - &nbsp; 1 Records Uploaded &nbsp; - &nbsp; 0</div><div class="t" style="font-size:11.6px;font-weight:700;color:#0000ff;top:369.18px;left:110.20px;transform:scaleX(1.0718);">Date and Time &nbsp; - &nbsp; 03/03/2021 19:54:35</div><div class="t" style="font-size:11.6px;font-weight:700;color:#0000ff;top:384.18px;left:147.24px;transform:scaleX(1.0169);">Execution Time &nbsp; - &nbsp; 0:00:00</div><div class="t" style="font-size:11.6px;font-weight:700;color:#0000ff;top:399.18px;left:182.24px;transform:scaleX(1.0125);clip-path:inset(0 0 2.78px 0);">Run Reason &nbsp; -</div><div class="t" style="font-size:11.6px;font-weight:700;color:#000;top:362.18px;left:450.63px;transform:scaleX(1.0202);">Derived Object Key with</div><div class="t" style="font-size:11.6px;font-weight:700;color:#000;top:377.18px;left:495.25px;transform:scaleX(0.9945);">Formula</div><div class="t" style="font-size:11.6px;font-weight:700;color:#000;top:392.18px;left:447.49px;transform:scaleX(0.9500);">ExportOthers-OBJECTKEY</div><div class="t" style="font-size:11.6px;font-weight:700;color:#000;top:347.18px;left:608.48px;transform:scaleX(1.0364);">Object Key,</div><div class="t" style="font-size:11.6px;font-weight:700;color:#000;top:362.18px;left:600.48px;transform:scaleX(1.0411);">Concatenated</div><div class="t" style="font-size:11.6px;font-weight:700;color:#000;top:377.18px;left:602.23px;transform:scaleX(1.0293);">ExportOthers-</div><div class="t" style="font-size:11.6px;font-weight:700;color:#000;top:392.18px;left:609.57px;transform:scaleX(0.8683);">OBJECTKEY</div><div class="t" style="font-size:11.6px;font-weight:700;color:#000;top:362.18px;left:697.81px;transform:scaleX(0.9729);">Class Number</div><div class="t" style="font-size:11.6px;font-weight:700;color:#000;top:377.18px;left:695.43px;transform:scaleX(1.0267);">ExportOthers-</div><div class="t" style="font-size:11.6px;font-weight:700;color:#000;top:392.18px;left:705.84px;transform:scaleX(0.9147);">CLASSNUM</div><div class="t" style="font-size:11.6px;font-weight:700;color:#000;top:377.18px;left:805.54px;transform:scaleX(1.0095);">Loop ID</div><div class="t" style="font-size:11.6px;font-weight:700;color:#000;top:392.18px;left:806.50px;transform:scaleX(0.9929);">Column</div><div class="t" style="font-size:11.6px;font-weight:700;color:#000;top:377.18px;left:945.69px;transform:scaleX(1.0202);">Characteristic Name</div><div class="t" style="font-size:11.6px;font-weight:700;color:#000;top:392.18px;left:907.77px;transform:scaleX(0.9144);">ALLOCVALUESCHARNEW-CHARACT</div><div class="t" style="font-size:11.6px;font-weight:700;color:#000;top:362.18px;left:1147.29px;transform:scaleX(1.0273);">Characteristic Value</div><div class="t" style="font-size:11.6px;font-weight:700;color:#000;top:377.18px;left:1143.78px;transform:scaleX(0.8948);">ALLOCVALUESCHARNE</div><div class="t" style="font-size:11.6px;font-weight:700;color:#000;top:392.18px;left:1151.30px;transform:scaleX(0.9371);">W-VALUE_NEUTRAL</div><div class="t" style="font-size:11.6px;font-weight:700;color:#000;top:332.18px;left:1282.19px;transform:scaleX(1.0776);">Data</div><div class="t" style="font-size:11.6px;font-weight:700;color:#000;top:347.18px;left:1283.00px;transform:scaleX(1.0796);">Type</div><div class="t" style="font-size:11.6px;font-weight:700;color:#000;top:362.18px;left:1282.52px;transform:scaleX(0.9558);">Code</div><div class="t" style="font-size:11.6px;font-weight:700;color:#000;top:377.18px;left:1273.26px;transform:scaleX(0.9890);">use C or</div><div class="t" style="font-size:11.6px;font-weight:700;color:#000;top:392.18px;left:1292.25px;transform:scaleX(1.0000);">N</div><div class="t" style="font-size:13.3px;font-weight:400;color:#000;top:411.74px;left:13.00px;transform:scaleX(0.9981);">Class type 001, object type MARA, object 000000006150700191 Object</div><div class="t" style="font-size:13.3px;font-weight:400;color:#000;top:450.74px;left:9.89px;transform:scaleX(1.0102);">000000006150700191 does not exist Assignment was not created</div><div class="t" style="font-size:13.3px;font-weight:400;color:#000;top:469.74px;left:9.23px;transform:scaleX(1.0173);">Item row D: See Log above</div><div class="t" style="font-size:13.3px;font-weight:400;color:#000;top:488.74px;left:9.23px;transform:scaleX(1.0173);">Item row D: See Log above</div><div class="t" style="font-size:13.3px;font-weight:400;color:#000;top:507.74px;left:9.23px;transform:scaleX(1.0173);">Item row D: See Log above</div><div class="t" style="font-size:13.3px;font-weight:400;color:#000;top:526.74px;left:9.23px;transform:scaleX(1.0173);">Item row D: See Log above</div><div class="t" style="font-size:13.3px;font-weight:400;color:#000;top:545.74px;left:13.00px;transform:scaleX(0.9981);">Class type 001, object type MARA, object 000000006150700191 Object</div><div class="t" style="font-size:13.3px;font-weight:400;color:#000;top:584.74px;left:9.89px;transform:scaleX(1.0102);">000000006150700191 does not exist Assignment was not created</div><div class="t" style="font-size:13px;font-weight:400;color:#000;top:451.00px;left:441.71px;transform:scaleX(0.9721);">000000006150700191</div><div class="t" style="font-size:13px;font-weight:400;color:#000;top:450.50px;left:605.91px;transform:scaleX(0.9740);">6150700191</div><div class="t" style="font-size:11px;font-weight:400;color:#000;top:452.69px;left:684.89px;transform:scaleX(0.9446);">MAT_CPD</div><div class="t" style="font-size:12.5px;font-weight:400;color:#000;top:452.42px;left:822.77px;transform:scaleX(1.0286);">H</div><div class="t" style="font-size:12.5px;font-weight:400;color:#000;top:471.42px;left:823.07px;transform:scaleX(0.9333);">D</div><div class="t" style="font-size:12.5px;font-weight:400;color:#000;top:490.42px;left:823.07px;transform:scaleX(0.9333);">D</div><div class="t" style="font-size:12.5px;font-weight:400;color:#000;top:509.42px;left:823.07px;transform:scaleX(0.9333);">D</div><div class="t" style="font-size:12.5px;font-weight:400;color:#000;top:528.42px;left:823.07px;transform:scaleX(0.9333);">D</div><div class="t" style="font-size:12.5px;font-weight:400;color:#000;top:586.42px;left:823.07px;transform:scaleX(0.9333);">D</div><div class="t" style="font-size:10.5px;font-weight:400;color:#000;top:472.11px;left:867.71px;transform:scaleX(0.9732);">CPD_FINAL_OUTPUT_TORQUE</div><div class="t" style="font-size:10.5px;font-weight:400;color:#000;top:491.11px;left:867.71px;transform:scaleX(0.9822);">CPD_FINAL_OUTPUT_TORQUE_IN_LB</div><div class="t" style="font-size:10.5px;font-weight:400;color:#000;top:510.11px;left:867.72px;transform:scaleX(0.9596);">CPD_FINAL_OUTPUT_SPEED</div><div class="t" style="font-size:12.8px;font-weight:400;color:#000;top:528.16px;left:867.70px;transform:scaleX(0.9922);">CPD_DIMENSION_A_INCH</div><div class="t" style="font-size:12.8px;font-weight:400;color:#000;top:586.16px;left:867.71px;transform:scaleX(0.9878);">CPD_DIMENSION_B_INCH</div><div class="t" style="font-size:10.5px;font-weight:400;color:#000;top:472.11px;left:1142.78px;transform:scaleX(0.9667);">RED</div><div class="t" style="font-size:10.5px;font-weight:400;color:#000;top:491.11px;left:1142.76px;transform:scaleX(0.9892);">LOW</div><div class="t" style="font-size:10.5px;font-weight:400;color:#000;top:510.11px;left:1142.51px;transform:scaleX(0.9821);">SMALL</div><div class="t" style="font-size:12.8px;font-weight:400;color:#000;top:528.16px;left:1241.39px;transform:scaleX(1.0250);">56,3</div><div class="t" style="font-size:12.8px;font-weight:400;color:#000;top:586.16px;left:1241.39px;transform:scaleX(1.0250);">57,5</div><div class="t" style="font-size:12.5px;font-weight:400;color:#000;top:471.42px;left:1272.03px;transform:scaleX(0.9375);">C</div><div class="t" style="font-size:12.5px;font-weight:400;color:#000;top:490.42px;left:1272.03px;transform:scaleX(0.9375);">C</div><div class="t" style="font-size:12.5px;font-weight:400;color:#000;top:509.42px;left:1272.03px;transform:scaleX(0.9375);">C</div><div class="t" style="font-size:12.5px;font-weight:400;color:#000;top:528.42px;left:1271.86px;transform:scaleX(1.1429);">N</div><div class="t" style="font-size:12.5px;font-weight:400;color:#000;top:586.42px;left:1271.86px;transform:scaleX(1.1429);">N</div><div class="t" style="font-size:13.5px;font-weight:400;color:#000;top:469.57px;left:1326.89px;transform:scaleX(1.0195);">data type C for character or N for numeric</div>
</body></html>
